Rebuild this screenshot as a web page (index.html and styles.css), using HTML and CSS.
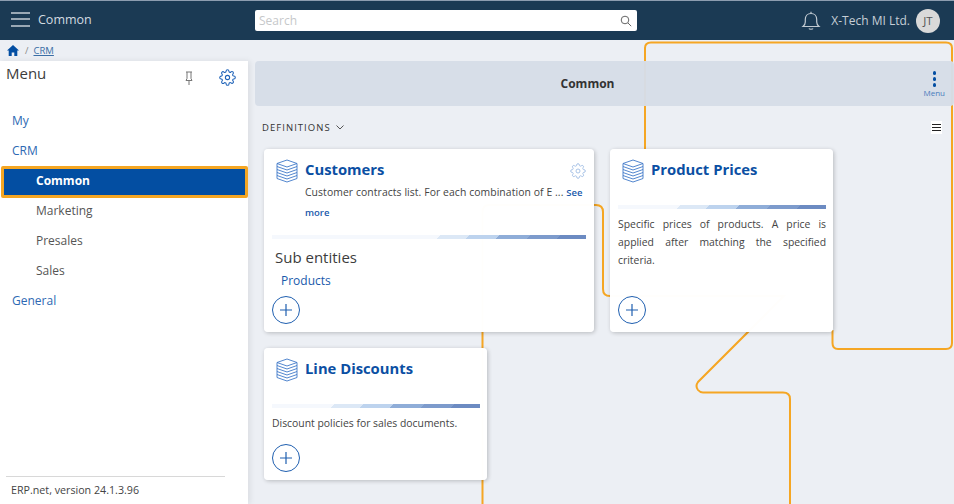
FILE: index.html
```html
<!DOCTYPE html>
<html>
  <head>
    <meta charset="utf-8">
    <title>Common</title>
    <link rel="stylesheet" href="styles.css">
  </head>
  <body>

    <!-- tour highlight line, lies behind the main content -->
    <svg class="trace" width="954" height="504" viewBox="0 0 954 504">
      <path d="M645 149V48Q645 42.500 651 42.500H946Q952 42.500 952 48V343Q952 349 946 349H838Q832.500 349 832.500 343V330"/>
      <path d="M482.500 504V212Q482.500 205 489 205H596Q603 205 603 212V289Q603 296 610 296H784L698 382Q695 386 698 390Q700 392.500 703 392.500H783Q790 392.500 790 399V504"/>
    </svg>

    <header class="topbar">
      <div class="topbar-left">
        <div class="burger"><span></span><span></span><span></span></div>
        <span class="topbar-title">Common</span>
      </div>
      <div class="search">
        <span class="search-text">Search</span>
        <svg width="12" height="12" viewBox="0 0 12 12" class="search-icon"><circle cx="5" cy="5" r="3.800"/><path d="M8 8l3.200 3.200"/></svg>
      </div>
      <div class="topbar-right">
        <svg class="bell" width="20" height="20" viewBox="0 0 20 20"><path d="M2 15.500c1.500-1.300 2.300-2.500 2.300-4.500V8.500C4.300 5 6.700 2.500 10 2.500s5.700 2.500 5.700 6V11c0 2 .8 3.200 2.300 4.500z"/><path d="M10 .8v1.700M8 17.500c.4 1 3.600 1 4 0"/></svg>
        <span class="company">X-Tech MI Ltd.</span>
        <span class="avatar">JT</span>
      </div>
    </header>

    <div class="crumbs">
      <svg width="12" height="11" viewBox="0 0 12 11" class="home"><path d="M6 0L0 5.500h1.700V11h3V7.400h2.600V11h3V5.500H12z"/></svg>
      <span class="crumb-sep">/</span>
      <a class="crumb-link">CRM</a>
    </div>

    <div class="layout">
      <aside class="sidebar">
        <div class="side-head">
          <span class="side-title">Menu</span>
          <svg class="pin" width="14" height="16" viewBox="0 0 14 16"><path d="M4 2h6M5 2v6.500L4 10.500h6L9 8.500V2M7 10.500V15"/></svg>
          <svg class="gear gear-side" width="17" height="17" viewBox="0 0 24 24"><circle cx="12" cy="12" r="3"/><path d="M19.400 15a1.650 1.650 0 0 0 .33 1.820l.06.06a2 2 0 0 1 0 2.830 2 2 0 0 1-2.830 0l-.06-.06a1.650 1.650 0 0 0-1.820-.33 1.650 1.650 0 0 0-1 1.510V21a2 2 0 0 1-2 2 2 2 0 0 1-2-2v-.09A1.650 1.650 0 0 0 9 19.400a1.650 1.650 0 0 0-1.820.33l-.06.06a2 2 0 0 1-2.830 0 2 2 0 0 1 0-2.830l.06-.06a1.650 1.650 0 0 0 .33-1.820 1.650 1.650 0 0 0-1.510-1H3a2 2 0 0 1-2-2 2 2 0 0 1 2-2h.09A1.650 1.650 0 0 0 4.600 9a1.650 1.650 0 0 0-.33-1.820l-.06-.06a2 2 0 0 1 0-2.830 2 2 0 0 1 2.830 0l.06.06a1.650 1.650 0 0 0 1.820.33H9a1.650 1.650 0 0 0 1-1.510V3a2 2 0 0 1 2-2 2 2 0 0 1 2 2v.09a1.650 1.650 0 0 0 1 1.510 1.650 1.650 0 0 0 1.820-.33l.06-.06a2 2 0 0 1 2.830 0 2 2 0 0 1 0 2.830l-.06.06a1.650 1.650 0 0 0-.33 1.820V9a1.650 1.650 0 0 0 1.510 1H21a2 2 0 0 1 2 2 2 2 0 0 1-2 2h-.09a1.650 1.650 0 0 0-1.510 1z"/></svg>
        </div>
        <ul class="side-menu">
          <li class="group">My</li>
          <li class="group">CRM</li>
          <li class="sub selected">Common</li>
          <li class="sub">Marketing</li>
          <li class="sub">Presales</li>
          <li class="sub">Sales</li>
          <li class="group">General</li>
        </ul>
        <div class="side-foot">ERP.net, version 24.1.3.96</div>
      </aside>

      <main class="content">
        <div class="toolbar">
          <span class="toolbar-title">Common</span>
          <div class="toolbar-menu">
            <span class="kebab"><i></i><i></i><i></i></span>
            <span class="toolbar-menu-label">Menu</span>
          </div>
        </div>

        <div class="section-row">
          <span class="section-name">DEFINITIONS
            <svg width="8" height="5" viewBox="0 0 8 5" class="chev"><path d="M.5.500L4 4 7.500.500"/></svg>
          </span>
          <span class="list-toggle"><i></i><i></i><i></i></span>
        </div>

        <div class="cards">
          <section class="card card-wide">
            <div class="card-head">
              <svg class="stack" width="22" height="24" viewBox="0 0 22 24"><path d="M11 1L21 4.500 11 8 1 4.500zM1 4.500v15l10 3.500 10-3.500v-15M1 7.500L11 11l10-3.500M1 10.500L11 14l10-3.500M1 13.500L11 17l10-3.500M1 16.500L11 20l10-3.500"/></svg>
              <div class="card-titles">
                <h2 class="card-title">Customers</h2>
                <p class="card-note">Customer contracts list. For each combination of E ... <a class="see-more">See more</a></p>
              </div>
              <svg class="gear gear-card" width="16" height="16" viewBox="0 0 24 24"><circle cx="12" cy="12" r="3"/><path d="M19.400 15a1.650 1.650 0 0 0 .33 1.820l.06.06a2 2 0 0 1 0 2.830 2 2 0 0 1-2.830 0l-.06-.06a1.650 1.650 0 0 0-1.820-.33 1.650 1.650 0 0 0-1 1.510V21a2 2 0 0 1-2 2 2 2 0 0 1-2-2v-.09A1.650 1.650 0 0 0 9 19.400a1.650 1.650 0 0 0-1.820.33l-.06.06a2 2 0 0 1-2.830 0 2 2 0 0 1 0-2.830l.06-.06a1.650 1.650 0 0 0 .33-1.820 1.650 1.650 0 0 0-1.510-1H3a2 2 0 0 1-2-2 2 2 0 0 1 2-2h.09A1.650 1.650 0 0 0 4.600 9a1.650 1.650 0 0 0-.33-1.820l-.06-.06a2 2 0 0 1 0-2.830 2 2 0 0 1 2.830 0l.06.06a1.650 1.650 0 0 0 1.820.33H9a1.650 1.650 0 0 0 1-1.510V3a2 2 0 0 1 2-2 2 2 0 0 1 2 2v.09a1.650 1.650 0 0 0 1 1.510 1.650 1.650 0 0 0 1.820-.33l.06-.06a2 2 0 0 1 2.830 0 2 2 0 0 1 0 2.830l-.06.06a1.650 1.650 0 0 0-.33 1.820V9a1.650 1.650 0 0 0 1.510 1H21a2 2 0 0 1 2 2 2 2 0 0 1-2 2h-.09a1.650 1.650 0 0 0-1.510 1z"/></svg>
            </div>
            <div class="stripe"></div>
            <h3 class="sub-title">Sub entities</h3>
            <a class="sub-link">Products</a>
            <button class="add-btn"><svg width="14" height="14" viewBox="0 0 14 14"><path d="M7 1v12M1 7h12"/></svg></button>
          </section>

          <section class="card">
            <div class="card-head">
              <svg class="stack" width="22" height="24" viewBox="0 0 22 24"><path d="M11 1L21 4.500 11 8 1 4.500zM1 4.500v15l10 3.500 10-3.500v-15M1 7.500L11 11l10-3.500M1 10.500L11 14l10-3.500M1 13.500L11 17l10-3.500M1 16.500L11 20l10-3.500"/></svg>
              <div class="card-titles">
                <h2 class="card-title">Product Prices</h2>
              </div>
            </div>
            <div class="stripe"></div>
            <p class="card-text">Specific prices of products. A price is applied after matching the specified criteria.</p>
            <button class="add-btn"><svg width="14" height="14" viewBox="0 0 14 14"><path d="M7 1v12M1 7h12"/></svg></button>
          </section>

          <section class="card">
            <div class="card-head">
              <svg class="stack" width="22" height="24" viewBox="0 0 22 24"><path d="M11 1L21 4.500 11 8 1 4.500zM1 4.500v15l10 3.500 10-3.500v-15M1 7.500L11 11l10-3.500M1 10.500L11 14l10-3.500M1 13.500L11 17l10-3.500M1 16.500L11 20l10-3.500"/></svg>
              <div class="card-titles">
                <h2 class="card-title">Line Discounts</h2>
              </div>
            </div>
            <div class="stripe"></div>
            <p class="card-text">Discount policies for sales documents.</p>
            <button class="add-btn"><svg width="14" height="14" viewBox="0 0 14 14"><path d="M7 1v12M1 7h12"/></svg></button>
          </section>
        </div>
      </main>
    </div>

  </body>
</html>
```

FILE: styles.css
```css
* {
  box-sizing: border-box;
}

html, body {
  margin: 0;
  height: 504px;
  overflow: hidden;
}

body {
  position: relative;
  display: flex;
  flex-direction: column;
  background: #eceff4;
  font-family: 'Open Sans', sans-serif;
  color: #3c3c3c;
}

.trace {
  position: absolute;
  top: 0;
  left: 0;
}
.trace path {
  fill: none;
  stroke: #f5a623;
  stroke-width: 2;
}

/* top bar */
.topbar {
  position: relative;
  display: flex;
  align-items: center;
  height: 40px;
  flex: none;
  background: #1b3a54;
  border-top: 1px solid #8d9db0;
  color: #d3dae0;
}
.topbar-left {
  display: flex;
  align-items: center;
  width: 255px;
  padding-left: 11px;
  margin-bottom: 3px;
}
.burger {
  display: flex;
  flex-direction: column;
  gap: 4.500px;
  width: 19px;
  margin-right: 8px;
}
.burger span {
  height: 2px;
  background: #9aa8b5;
}
.topbar-title {
  font-size: 12.500px;
}
.search {
  display: flex;
  align-items: center;
  justify-content: space-between;
  width: 382px;
  height: 21px;
  padding: 0 4px;
  background: #fff;
  border-radius: 2px;
}
.search-text {
  font-size: 12px;
  color: #c6c8ca;
}
.search-icon {
  fill: none;
  stroke: #666;
  stroke-width: 1;
  margin-right: 1px;
}
.topbar-right {
  display: flex;
  align-items: center;
  margin-left: auto;
  padding-right: 14px;
}
.bell {
  fill: none;
  stroke: #c2cad2;
  stroke-width: 1.200;
  margin-right: 10px;
}
.company {
  font-size: 12px;
  color: #c6ced6;
  margin-right: 6px;
}
.avatar {
  display: flex;
  align-items: center;
  justify-content: center;
  width: 24px;
  height: 24px;
  border-radius: 50%;
  background: #d9d9d9;
  color: #555;
  font-size: 11.500px;
}

/* breadcrumb */
.crumbs {
  position: relative;
  display: flex;
  align-items: center;
  height: 21px;
  flex: none;
  padding-left: 7px;
  font-size: 9.500px;
}
.home {
  fill: #034ea2;
}
.crumb-sep {
  margin: 0 5px 0 6px;
  color: #888;
}
.crumb-link {
  color: #3a6ea5;
  text-decoration: underline;
}

.layout {
  flex: 1;
  display: flex;
  min-height: 0;
}

/* side menu */
.sidebar {
  position: relative;
  display: flex;
  flex-direction: column;
  width: 248px;
  flex: none;
  background: #fff;
  box-shadow: 2px 0 6px rgba(0, 0, 0, .08);
}
.side-head {
  display: flex;
  align-items: flex-start;
  height: 44px;
  margin-bottom: 1px;
  padding-left: 6px;
}
.side-title {
  flex: 1;
  font-size: 15px;
  line-height: 24px;
}
.pin {
  fill: none;
  stroke: #777;
  stroke-width: 1;
  margin: 9px 23px 0 0;
}
.gear {
  fill: none;
  stroke-width: 1.500;
}
.gear-side {
  stroke: #1f63b8;
  margin: 8px 12px 0 0;
}
.side-menu {
  list-style: none;
  margin: 0;
  padding: 0;
  font-size: 12px;
}
.side-menu li {
  height: 30px;
  line-height: 30px;
}
.group {
  padding-left: 12px;
  color: #2d69b3;
}
.sub {
  padding-left: 36px;
  color: #555;
}
.side-menu .selected {
  height: 32px;
  margin: 0 0 -2px 1px;
  padding-left: 32px;
  line-height: 24px;
  background: #034ea2;
  border: 3px solid #f5a623;
  border-radius: 2px;
  color: #fff;
  font-size: 12px;
  font-weight: 700;
}
.side-foot {
  margin: auto 23px 0 6px;
  height: 28px;
  padding: 6px 0 0 5px;
  border-top: 1px solid #d8d8d8;
  font-size: 10.700px;
  color: #444;
}

/* main area */
.content {
  position: relative;
  flex: 1;
  padding: 0 0 0 7px;
}
.toolbar {
  position: relative;
  display: flex;
  align-items: center;
  justify-content: center;
  height: 45px;
  background: rgba(214, 221, 231, .97);
  border-radius: 4px;
}
.toolbar-title {
  font-size: 12px;
  font-weight: 700;
  color: #333;
  margin-right: 34px;
}
.toolbar-menu {
  position: absolute;
  right: 9px;
  top: 10px;
  display: flex;
  flex-direction: column;
  align-items: center;
}
.kebab {
  display: flex;
  flex-direction: column;
  gap: 2.500px;
}
.kebab i {
  width: 3.500px;
  height: 3.500px;
  border-radius: 50%;
  background: #034ea2;
}
.toolbar-menu-label {
  font-size: 8px;
  line-height: 12px;
  color: #4a7dbd;
}
.section-row {
  display: flex;
  align-items: center;
  justify-content: space-between;
  height: 43px;
  padding: 0 12px 0 7px;
}
.section-name {
  font-size: 9.500px;
  letter-spacing: 1.050px;
  color: #333;
}
.chev {
  fill: none;
  stroke: #555;
  margin-left: 2px;
  vertical-align: 1px;
}
.list-toggle {
  display: flex;
  flex-direction: column;
  gap: 1.500px;
  padding: 3px 1px;
  background: #fff;
}
.list-toggle i {
  width: 9px;
  height: 1.500px;
  background: #222;
}
.cards {
  display: flex;
  flex-wrap: wrap;
  gap: 16px;
  padding-left: 9px;
}

/* cards */
.card {
  display: flex;
  flex-direction: column;
  width: 223px;
  padding: 0 7px 8px 8px;
  background: rgba(255, 255, 255, .99);
  border-radius: 4px;
  box-shadow: 1px 1px 4px rgba(0, 0, 0, .22);
}
.card-wide {
  width: 330px;
  padding-right: 8px;
}
.card-head {
  position: relative;
  display: flex;
  align-items: flex-start;
  min-height: 56px;
  padding-top: 9px;
}
.stack {
  flex: none;
  fill: none;
  stroke: #3e78c8;
  stroke-width: .9;
  margin: 1px 7px 0 4px;
}
.card-titles {
  flex: 1;
}
.card-title {
  margin: 0;
  font-size: 14.800px;
  line-height: 22px;
  font-weight: 700;
  color: #0b4fa3;
}
.card-note {
  margin: 2px 0 13px;
  font-size: 10.400px;
  letter-spacing: .08px;
  line-height: 20px;
  color: #444;
}
.see-more {
  font-size: 9.500px;
  font-weight: 600;
  letter-spacing: 0;
  line-height: 1;
  color: #1a5aab;
}
.gear-card {
  position: absolute;
  top: 14px;
  right: 0;
  stroke: #9dbbe3;
  stroke-width: 1.300;
}
.stripe {
  height: 4px;
  flex: none;
  background: linear-gradient(-45deg, #6c8bc2 21px, #7d9bcc 21px, #7d9bcc 42px, #8fadd8 42px, #8fadd8 64px, #bdd3ee 64px, #bdd3ee 85px, #dce8f6 85px, #dce8f6 106px, #f5f8fd 106px);
}
.sub-title {
  margin: 8px 0 0 3px;
  font-size: 15px;
  line-height: 20px;
  font-weight: 400;
  color: #3c3c3c;
}
.sub-link {
  margin: 4px 0 0 9px;
  font-size: 12px;
  line-height: 20px;
  color: #1a5aab;
}
.card-text {
  margin: 6px 0 12px;
  font-size: 10.400px;
  line-height: 18px;
  text-align: justify;
  color: #444;
}
.add-btn {
  display: flex;
  align-items: center;
  justify-content: center;
  width: 28px;
  height: 28px;
  margin-top: auto;
  padding: 0;
  background: #fff;
  border: 1px solid #1f5fb0;
  border-radius: 50%;
}
.add-btn svg {
  fill: none;
  stroke: #1f5fb0;
  stroke-width: 1.200;
}
.card-wide .add-btn {
  margin-top: 5px;
}
```
